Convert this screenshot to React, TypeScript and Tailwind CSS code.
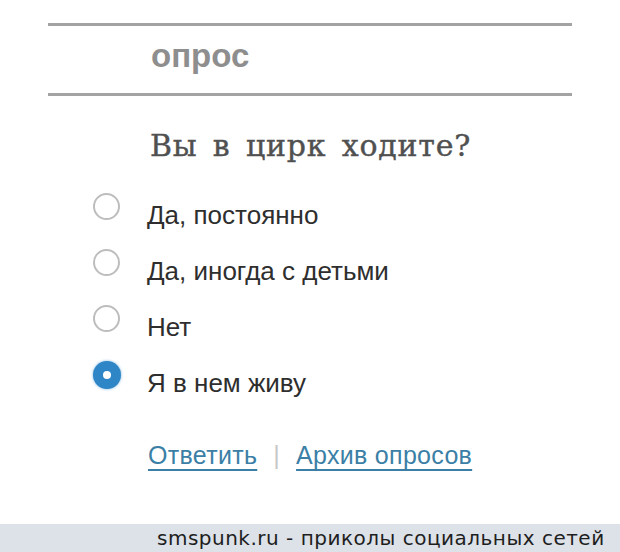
import React from "react";

const options = [
  { label: "Да, постоянно", checked: false },
  { label: "Да, иногда с детьми", checked: false },
  { label: "Нет", checked: false },
  { label: "Я в нем живу", checked: true },
];

function Radio({ checked }: { checked: boolean }) {
  if (checked) {
    return (
      <span className="flex h-[28px] w-[28px] shrink-0 items-center justify-center rounded-full bg-[#2f86c6] shadow-[0_0_3px_#7fb6e0]">
        <span className="h-[8px] w-[8px] rounded-full bg-white" />
      </span>
    );
  }
  return <span className="block h-[27px] w-[27px] shrink-0 rounded-full border-2 border-[#bdbdbd] bg-white" />;
}

export default function App() {
  return (
    <div className="flex h-[552px] w-[620px] flex-col bg-white">
      <div className="ml-[48px] mt-[23px] h-[3px] w-[524px] bg-[#a3a3a3]" />
      <div
        className="h-[67px] pl-[151px] pt-[10px] text-[33px] font-bold leading-[40px] text-[#8e8e8e]"
        style={{ fontFamily: '"Liberation Sans", Arial, sans-serif' }}
      >
        опрос
      </div>
      <div className="ml-[48px] h-[3px] w-[524px] bg-[#a3a3a3]" />
      <div
        className="mt-[30px] pl-[150px] text-[30px] leading-[40px] tracking-[0.8px] text-[#505050] [word-spacing:5px] [-webkit-text-stroke:0.4px_#505050]"
        style={{ fontFamily: '"DejaVu Serif", Georgia, serif' }}
      >
        Вы в цирк ходите?
      </div>
      <div
        className="mt-[27px] flex flex-col gap-[21px] pl-[93px]"
        style={{ fontFamily: '"Liberation Sans", Arial, sans-serif' }}
      >
        {options.map((o) => (
          <div key={o.label} className="flex h-[35px] items-start">
            <Radio checked={o.checked} />
            <span
              className={`mt-[9px] text-[26px] leading-[27px] text-[#2e2e2e] ${
                o.checked ? "ml-[26px]" : "ml-[27px]"
              }`}
            >
              {o.label}
            </span>
          </div>
        ))}
      </div>
      <div
        className="mt-[44px] flex items-center pl-[148px] text-[25px] leading-[30px] tracking-[0.3px]"
        style={{ fontFamily: '"Liberation Sans", Arial, sans-serif' }}
      >
        <span className="text-[#3b7fa6] underline decoration-[2px] underline-offset-[5px]">Ответить</span>
        <span className="mx-[16px] text-[#c8c8c8]">|</span>
        <span className="text-[#3b7fa6] underline decoration-[2px] underline-offset-[5px]">Архив опросов</span>
      </div>
      <div className="flex-1" />
      <div
        className="flex h-[28px] items-center bg-[#dde1e8] pl-[157px] text-[20px] tracking-[0.5px] text-[#1e1e1e]"
        style={{ fontFamily: '"DejaVu Sans", sans-serif' }}
      >
        smspunk.ru - приколы социальных сетей
      </div>
    </div>
  );
}
